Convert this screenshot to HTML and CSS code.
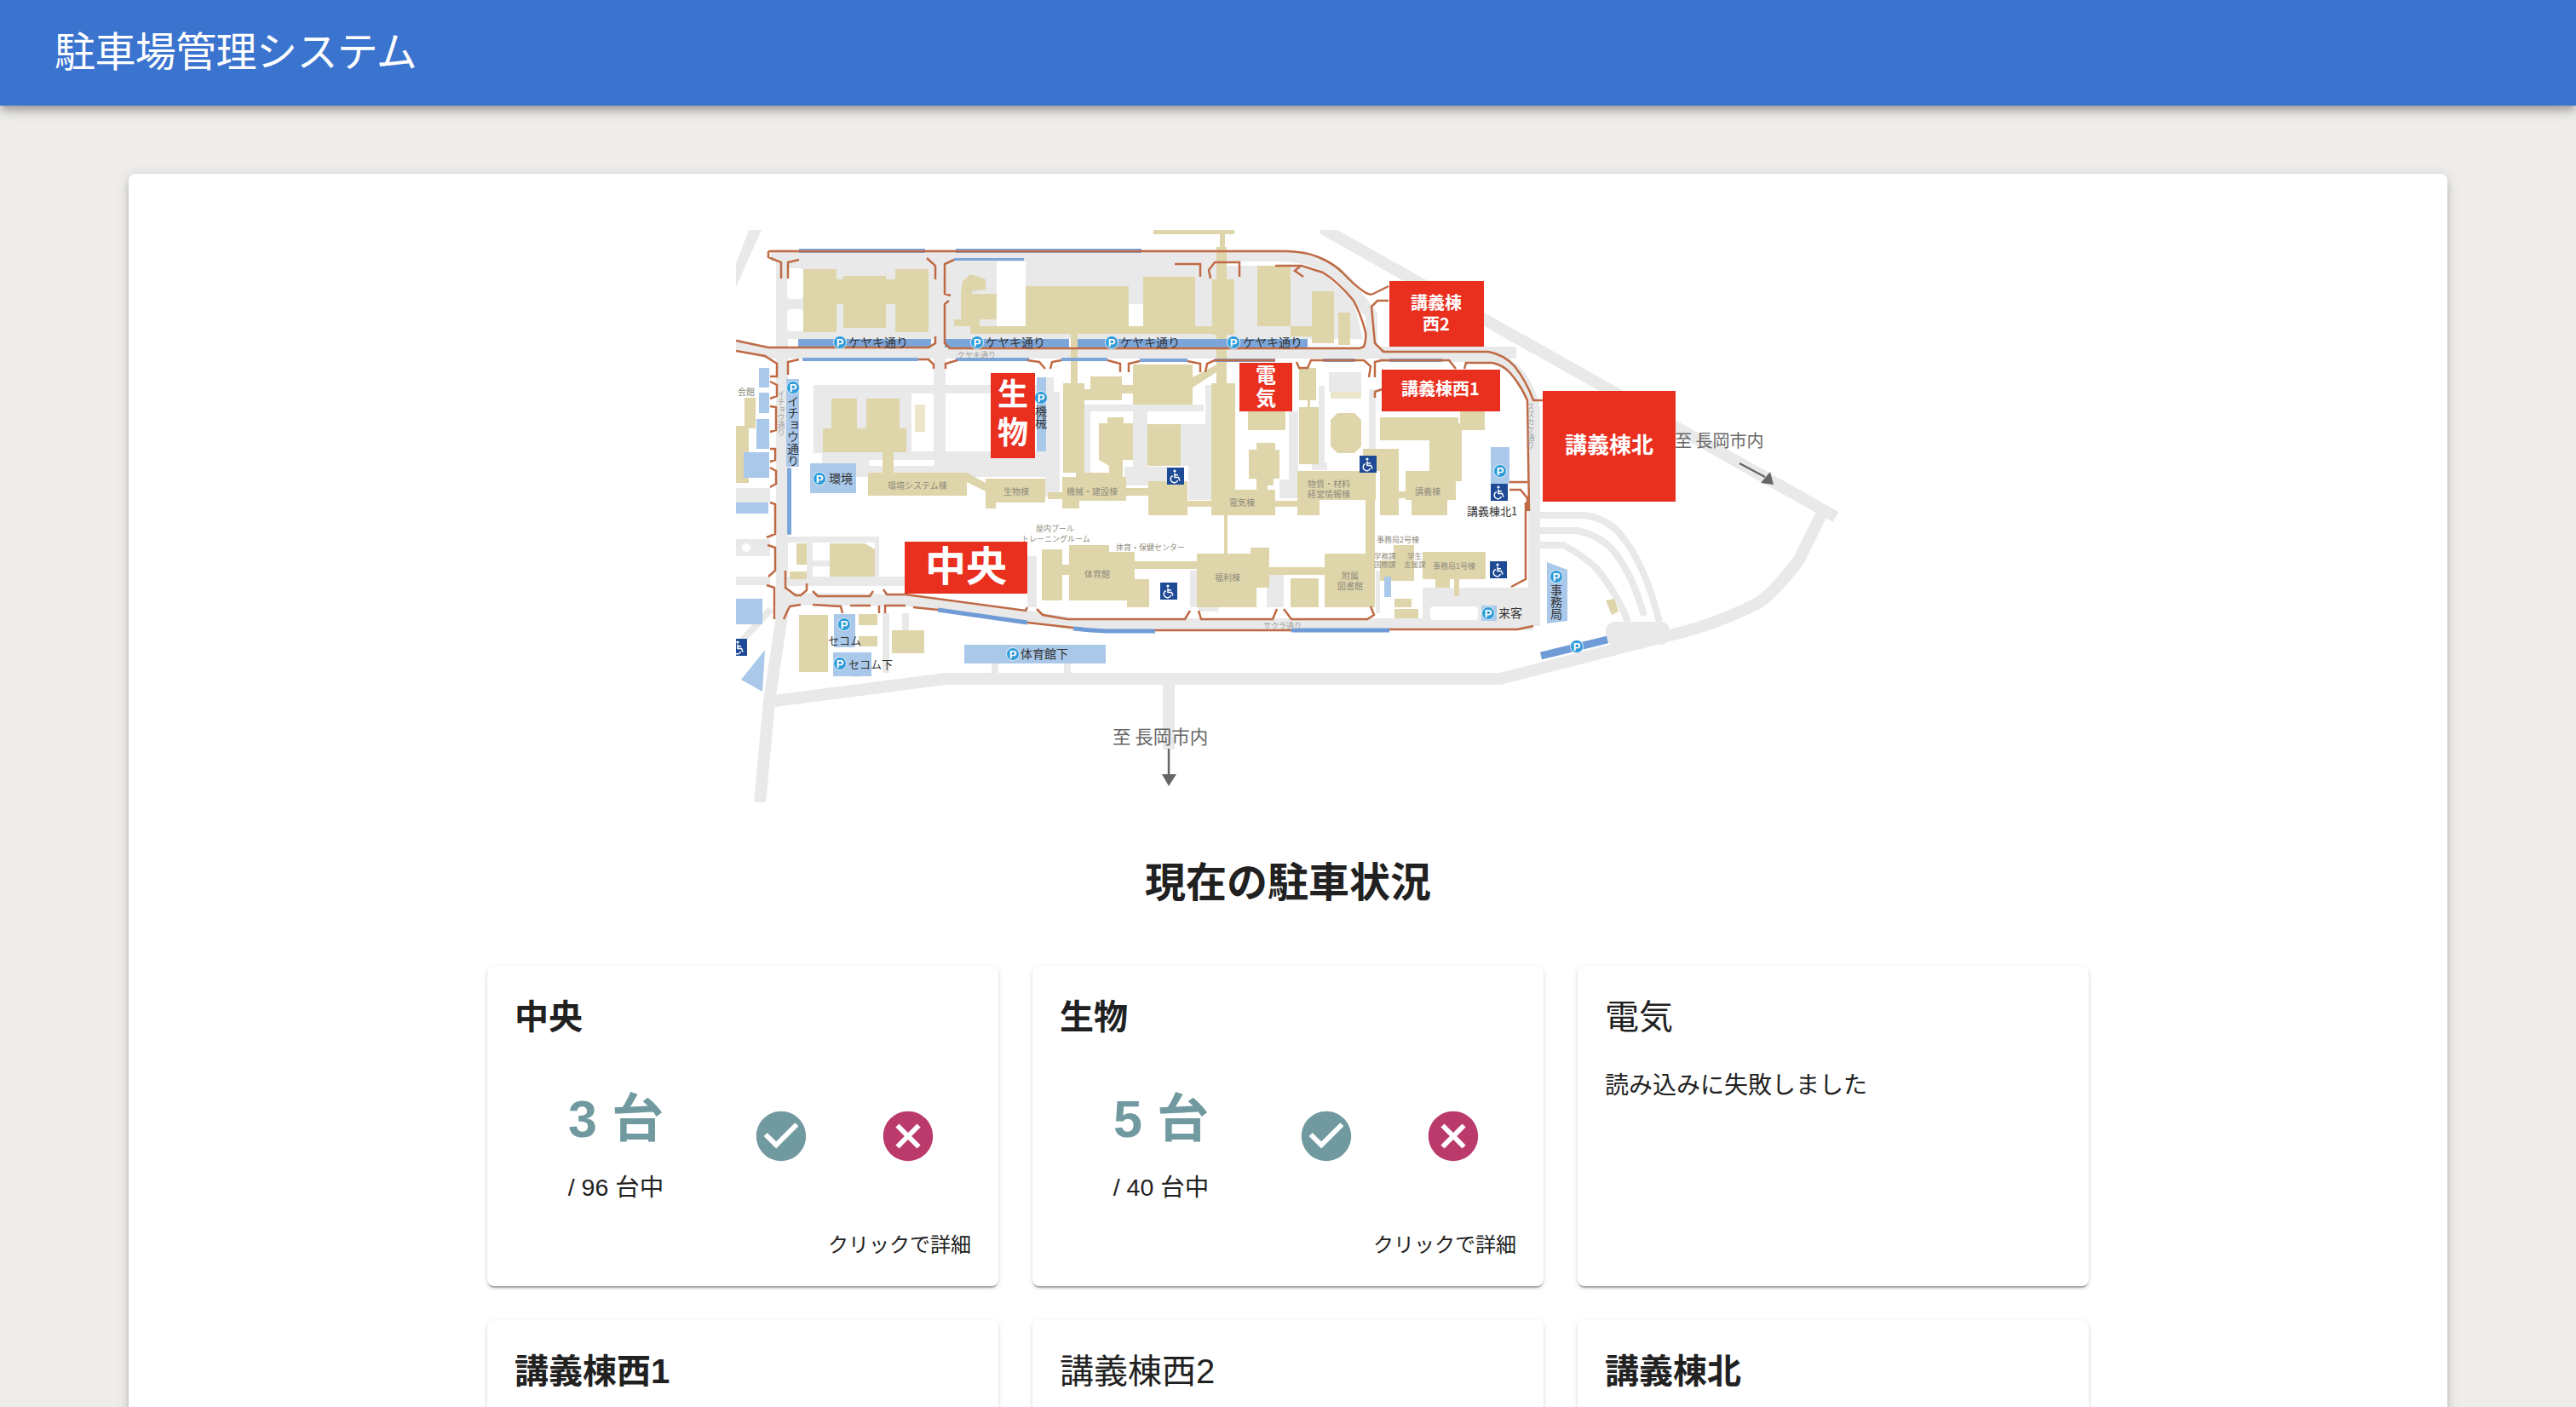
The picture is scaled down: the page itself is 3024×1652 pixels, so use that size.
FILE: index.html
```html
<!DOCTYPE html>
<html lang="ja">
<head>
  <meta charset="UTF-8"/>
  <title>駐車場管理システム</title>
  <link rel="stylesheet" href="styles.css">
</head>
<body>
  <header class="appbar">
    <h1 class="appbar-title">駐車場管理システム</h1>
  </header>

  <main class="sheet">
    <!-- 構内マップ (座標はスクリーンショットのピクセル値) -->
    <svg class="campus-map" viewBox="864 270 1296 672" role="img" aria-label="構内マップ">
      <defs>
        <g id="pk">
          <circle class="pk-ring" r="8"/>
          <circle class="pk-disc" r="7"/>
          <text class="pk-p" y="4.500">P</text>
        </g>
        <g id="wc">
          <rect class="wc-bg" width="20" height="20"/>
          <circle class="wc-fg" cx="9" cy="4" r="1.6"/>
          <path class="wc-line" d="M9 6.500V11.500H13.500L15 15.500M9 8.800H13"/>
          <path class="wc-line" d="M6.800 9.500A4.300 4.300 0 1 0 12.500 15"/>
        </g>
      </defs>

      <!-- 道路 -->
      <g class="road">
        <path d="M1552 268L2155 607"/>
        <path d="M2138 604L2112 657Q2080 700 2060 710Q2010 735 1956 747L1761 797H1110L909 823"/>
        <path d="M892 942L903 823L918 723V296"/>
        <path d="M1372 797V880"/>
        <path class="road-s" d="M1168 779V792M1253 779V792"/>
        <path d="M864 405L902 414H1780"/>
        <path d="M905 300H1500Q1550 300 1580 330L1610 370V414"/>
        <path d="M1103 303V540"/>
        <path d="M918 703L1066 705L1208 724L1262 733H1800"/>
        <path d="M1619 418H1747Q1790 430 1801 480V735"/>
        <path class="road-s" d="M1807 605H1861Q1890 610 1904 630Q1930 660 1948 730"/>
        <path class="road-s" d="M1807 623H1852Q1875 628 1891 643Q1915 670 1930 723"/>
        <path class="road-s" d="M1802 640H1835Q1855 650 1874 667Q1900 700 1911 730"/>
        <path class="road-s" d="M864 760L905 715"/>
        <path class="road-s" d="M1005 795V770M1040 790V720M1063 720V745"/>
      </g>
      <g class="grey">
        <polygon points="879,270 894,270 864,337 864,310"/>
        <rect x="918" y="303" width="180" height="95"/>
        <rect x="1109" y="300" width="320" height="98"/>
        <polygon points="1428,312 1520,312 1553,320 1589,353 1600,398 1428,398"/>
        <rect x="955" y="452" width="142" height="10"/>
        <rect x="955" y="452" width="115" height="80"/>
        <rect x="965" y="530" width="265" height="30"/>
        <rect x="1109" y="452" width="118" height="10"/>
        <rect x="1227" y="460" width="17" height="123"/>
        <rect x="1228" y="443" width="9" height="134"/>
        <rect x="1273" y="475" width="140" height="8"/>
        <rect x="1273" y="475" width="7" height="80"/>
        <rect x="1330" y="483" width="17" height="77"/>
        <rect x="1386" y="498" width="29" height="49"/>
        <rect x="1395" y="547" width="20" height="40"/>
        <rect x="1320" y="548" width="50" height="22"/>
        <rect x="1415" y="452" width="7" height="135"/>
        <rect x="1513" y="483" width="11" height="90"/>
        <rect x="1502" y="563" width="22" height="22"/>
        <rect x="1548" y="453" width="7" height="99"/>
        <rect x="1540" y="543" width="18" height="9"/>
        <rect x="1607" y="457" width="8" height="70"/>
        <rect x="1560" y="437" width="38" height="23"/>
        <rect x="1397" y="670" width="8" height="43"/>
        <rect x="1487" y="675" width="20" height="38"/>
        <rect x="1407" y="710" width="23" height="8"/>
        <rect x="1615" y="670" width="5" height="50"/>
        <rect x="864" y="573" width="40" height="17"/>
        <rect x="864" y="633" width="40" height="20"/>
        <rect x="864" y="677" width="40" height="10"/>
        <circle cx="876" cy="643" r="10"/>
        <rect x="922" y="630" width="110" height="7"/>
        <rect x="1027" y="630" width="5" height="47"/>
        <rect x="922" y="677" width="140" height="11"/>
        <rect x="947" y="637" width="7" height="40"/>
        <rect x="954" y="658" width="20" height="7"/>
        <rect x="1206" y="653" width="11" height="60"/>
        <rect x="1670" y="690" width="130" height="40"/>
        <rect x="1885" y="730" width="75" height="27" rx="10"/>
      </g>
      <g class="blank">
        <rect x="924" y="315" width="19" height="36" rx="4"/>
        <rect x="924" y="363" width="19" height="26" rx="4"/>
        <rect x="1170" y="307" width="34" height="77"/>
        <rect x="1325" y="357" width="17" height="26"/>
        <rect x="1679" y="712" width="56" height="16" rx="4"/>
        <rect x="1020" y="540" width="77" height="7" rx="3"/>
        <circle cx="876" cy="643" r="5"/>
      </g>

      <!-- 建物 -->
      <g class="bldg">
        <rect x="943" y="316" width="39" height="74"/>
        <rect x="982" y="328" width="8" height="29"/>
        <rect x="990" y="324" width="50" height="61"/>
        <rect x="1040" y="328" width="11" height="29"/>
        <rect x="1051" y="316" width="39" height="74"/>
        <polygon points="1130,330 1139,322 1157,328 1157,340 1141,342 1141,345 1128,345"/>
        <rect x="1128" y="345" width="42" height="30"/>
        <rect x="1120" y="375" width="30" height="8"/>
        <rect x="1139" y="383" width="287" height="9"/>
        <rect x="1204" y="336" width="121" height="47"/>
        <rect x="1342" y="325" width="61" height="58"/>
        <rect x="1354" y="270" width="95" height="5"/>
        <rect x="1432" y="270" width="6" height="30"/>
        <rect x="1428" y="290" width="12" height="38"/>
        <rect x="1423" y="328" width="26" height="65"/>
        <rect x="1428" y="392" width="12" height="58"/>
        <rect x="1422" y="450" width="28" height="125"/>
        <rect x="1257" y="392" width="8" height="58"/>
        <rect x="1248" y="450" width="25" height="105"/>
        <rect x="1273" y="457" width="7" height="13"/>
        <rect x="1280" y="442" width="37" height="28"/>
        <rect x="1317" y="452" width="13" height="10"/>
        <rect x="1330" y="428" width="70" height="47"/>
        <polygon points="1400,443 1428,428 1428,437 1400,455"/>
        <polygon points="1300,490 1319,490 1319,497 1330,497 1330,540 1318,540 1318,560 1302,560 1302,547 1290,540 1290,497 1300,497"/>
        <rect x="1347" y="498" width="39" height="49"/>
        <rect x="1247" y="560" width="75" height="28"/>
        <rect x="1263" y="555" width="47" height="5"/>
        <rect x="1247" y="588" width="20" height="9"/>
        <rect x="1322" y="573" width="26" height="9"/>
        <rect x="1348" y="565" width="46" height="40"/>
        <rect x="1394" y="588" width="28" height="7"/>
        <rect x="1422" y="575" width="75" height="30"/>
        <rect x="1475" y="570" width="13" height="5"/>
        <rect x="1497" y="588" width="26" height="7"/>
        <polygon points="1475,483 1509,483 1509,505 1465,505 1465,483"/>
        <polygon points="1475,520 1497,520 1497,528 1502,528 1502,562 1495,562 1495,570 1475,570 1475,562 1466,562 1466,528 1475,528"/>
        <rect x="1525" y="432" width="20" height="38"/>
        <rect x="1535" y="470" width="3" height="8"/>
        <rect x="1525" y="478" width="23" height="67"/>
        <polygon points="1570,485 1590,485 1598,493 1598,524 1590,532 1570,532 1562,524 1562,493"/>
        <rect class="bldg-faint" x="1562" y="460" width="36" height="8"/>
        <rect x="1523" y="553" width="92" height="34"/>
        <rect x="1523" y="587" width="26" height="18"/>
        <rect x="1603" y="587" width="11" height="63"/>
        <rect x="1600" y="527" width="42" height="26"/>
        <rect x="1620" y="553" width="22" height="52"/>
        <rect x="1642" y="577" width="8" height="8"/>
        <rect x="1650" y="553" width="59" height="34"/>
        <rect x="1657" y="587" width="42" height="18"/>
        <rect x="1678" y="503" width="38" height="62"/>
        <rect x="1620" y="490" width="92" height="27"/>
        <rect x="1712" y="497" width="31" height="8"/>
        <rect x="1714" y="468" width="29" height="35"/>
        <rect x="1019" y="555" width="116" height="27"/>
        <rect x="1036" y="530" width="13" height="25"/>
        <polygon points="1135,555 1157,567 1157,577 1135,566"/>
        <rect x="1157" y="562" width="70" height="28"/>
        <rect x="1157" y="590" width="12" height="7"/>
        <rect x="1230" y="578" width="17" height="8"/>
        <rect x="976" y="468" width="30" height="36"/>
        <rect x="1017" y="468" width="39" height="36"/>
        <rect x="966" y="503" width="98" height="28"/>
        <rect class="bldg-faint" x="1074" y="475" width="12" height="32"/>
        <rect x="874" y="467" width="13" height="36"/>
        <rect x="864" y="500" width="15" height="67"/>
        <rect x="1476" y="312" width="39" height="71"/>
        <rect x="1540" y="342" width="26" height="61"/>
        <rect x="1571" y="367" width="14" height="38"/>
        <rect x="1515" y="383" width="25" height="12"/>
        <rect x="1349" y="590" width="0" height="0"/>
        <rect x="1157" y="590" width="11" height="7"/>
        <rect x="1247" y="590" width="19" height="7"/>
        <rect x="1223" y="645" width="24" height="60"/>
        <rect x="1247" y="663" width="8" height="12"/>
        <rect x="1255" y="640" width="47" height="65"/>
        <rect x="1302" y="648" width="30" height="57"/>
        <rect x="1323" y="680" width="26" height="33"/>
        <rect x="1332" y="659" width="73" height="9"/>
        <rect x="1405" y="650" width="70" height="63"/>
        <rect x="1475" y="650" width="15" height="40"/>
        <rect x="1468" y="643" width="22" height="7"/>
        <rect x="1437" y="605" width="4" height="45"/>
        <rect x="1490" y="666" width="65" height="9"/>
        <rect x="1515" y="679" width="33" height="34"/>
        <rect x="1555" y="650" width="59" height="63"/>
        <rect x="1636" y="640" width="24" height="42"/>
        <rect x="1620" y="658" width="16" height="24"/>
        <rect x="1670" y="648" width="74" height="32"/>
        <rect x="1685" y="680" width="17" height="10"/>
        <rect x="1707" y="680" width="6" height="20"/>
        <rect x="1637" y="703" width="20" height="10"/>
        <rect x="1637" y="715" width="28" height="11"/>
        <polygon points="1885,705 1895,703 1900,718 1892,722"/>
        <polygon points="974,638 1015,638 1027,645 1027,677 974,677"/>
        <rect x="935" y="638" width="12" height="25"/>
        <rect x="927" y="671" width="20" height="9"/>
        <rect x="938" y="722" width="34" height="67"/>
        <rect x="1008" y="721" width="22" height="13"/>
        <rect x="1008" y="747" width="22" height="12"/>
        <rect x="1047" y="740" width="38" height="27"/>
      </g>

      <!-- 駐車スペース -->
      <g class="pale">
        <rect x="891" y="432" width="12" height="23"/>
        <rect x="891" y="461" width="12" height="24"/>
        <rect x="888" y="492" width="15" height="35"/>
        <rect x="873" y="531" width="30" height="30"/>
        <rect x="864" y="590" width="38" height="13"/>
        <rect x="864" y="703" width="31" height="30"/>
        <rect x="923" y="445" width="15" height="103"/>
        <rect x="951" y="544" width="54" height="35"/>
        <rect x="1217" y="443" width="11" height="87"/>
        <rect x="1750" y="525" width="22" height="43"/>
        <rect x="979" y="721" width="25" height="39"/>
        <rect x="978" y="766" width="45" height="28"/>
        <rect x="1132" y="757" width="166" height="22"/>
        <polygon points="870,798 898,763 895,812"/>
        <rect x="1739" y="711" width="18" height="18"/>
        <polygon points="1816,660 1840,669 1840,729 1816,732"/>
        <rect x="1625" y="677" width="8" height="24"/>
      </g>
      <g class="blue">
        <rect x="937" y="398" width="156" height="10"/>
        <rect x="1109" y="398" width="146" height="10"/>
        <rect x="1265" y="398" width="163" height="10"/>
        <rect x="1400" y="398" width="135" height="10"/>
        <rect x="942" y="420" width="136" height="4"/>
        <rect x="1122" y="420" width="86" height="4"/>
        <rect x="1246" y="420" width="54" height="4"/>
        <rect x="1338" y="421" width="56" height="4"/>
        <rect x="1426" y="421" width="71" height="4"/>
        <rect x="1553" y="421" width="38" height="4"/>
        <rect x="1631" y="421" width="62" height="4"/>
        <rect x="1120" y="303" width="82" height="3"/>
        <rect x="938" y="292" width="148" height="5"/>
        <rect x="1122" y="292" width="218" height="5"/>
        <rect x="924" y="549" width="5" height="79" rx="2"/>
      </g>
      <g class="blue-line">
        <path d="M1101 716L1206 731"/>
        <path d="M1260 738Q1290 741 1306 741H1356"/>
        <path d="M1516 740H1631"/>
        <path class="blue-thick" d="M1809 770L1887 751"/>
      </g>

      <!-- 縁石 -->
      <path class="curb" d="M902 295H1512Q1535 296 1548 302Q1565 309 1576 320Q1590 335 1602 343Q1608 347 1612 345L1630 336
        M902 295V302L917 308V327 M938 305L925 308V327 M1088 303L1098 312V328
        M1120 305L1109 310V345L1116 347 M1114 353L1109 357V403L1115 409H1596L1601 407Q1604 400 1603 390Q1598 370 1589 353Q1570 330 1553 320L1528 312H1497
        M864 400L902 408H1090L1098 403V395 M864 412L898 418L912 427V442H904
        M925 440V425L938 422 M1078 422H1090L1096 428V433 M1110 433V427L1124 423 M1206 423L1220 425L1227 433
        M1233 433L1235 425L1246 423 M1300 423L1315 427V437 M1325 437V427L1338 424 M1394 424L1409 427V437
        M1415 437L1417 427L1426 423H1497 M904 448L912 452V465L904 468 M904 477L911 478V505L904 507 M904 527H910V540L904 542
        M904 549L911 553V568L904 572 M904 590L910 592V627L900 631 M901 640L910 643V670L902 677 M900 687L909 690V727
        M922 670V690L934 699H940L947 693V685 M954 694L960 700H1021L1025 694 M1037 692L1041 698H1063L1204 717L1206 713
        M1217 715L1224 722L1253 727H1391L1397 717 M1407 717L1410 727H1494L1499 715 M1507 715L1516 727H1605L1613 722L1609 712
        M920 727L927 712L940 710 M954 710L987 712L989 720 M998 711H1022 M1032 720V711 M1039 720V711H1063 M1072 713L1101 716
        M1206 731L1260 737 M1356 740H1516 M1631 739H1781L1800 735 M1791 590V680L1774 689
        M1379 310H1409V325 M1455 325V308H1426L1419 317L1421 327 M1527 312L1520 318L1530 325
        M1630 353H1617L1610 360L1614 403L1624 413H1747Q1765 416 1778 430Q1792 448 1800 470H1811
        M1719 433L1721 426H1752Q1765 429 1772 437Q1785 452 1793 470L1795 600
        M1614 443V425L1622 423H1701L1709 433 M1607 443L1609 430L1601 423H1553 M1522 425L1525 432H1535L1539 423H1553
        M1614 467V460L1622 457 M1772 566H1793 M1772 575H1785L1793 585V600"/>

      <!-- 通りの名前 -->
      <g class="lbl-road">
        <text x="1124" y="420">ケヤキ通り</text>
        <text x="1483" y="738">サクラ通り</text>
        <text class="lbl-vert" x="917" y="458">イチョウ通り</text>
        <text class="lbl-vert" x="1797" y="473">スズカケ通り</text>
      </g>

      <!-- 建物名 -->
      <g class="lbl-bldg">
        <text x="866" y="464">会館</text>
        <text x="1042" y="574">環境システム棟</text>
        <text x="1178" y="581">生物棟</text>
        <text x="1252" y="581">機械・建設棟</text>
        <text x="1443" y="594">電気棟</text>
        <text x="1535" y="572">物質・材料</text>
        <text x="1535" y="584">経営情報棟</text>
        <text x="1661" y="581">講義棟</text>
        <text class="lbl-sm" x="1216" y="624">屋内プール</text>
        <text class="lbl-sm" x="1199" y="636">トレーニングルーム</text>
        <text class="lbl-sm" x="1310" y="646">体育・保健センター</text>
        <text x="1273" y="678">体育館</text>
        <text x="1426" y="682">福利棟</text>
        <text class="lbl-sm" x="1616" y="637">事務局2号棟</text>
        <text class="lbl-xs" x="1613" y="656">学務課</text>
        <text class="lbl-xs" x="1613" y="666">国際課</text>
        <text class="lbl-xs" x="1652" y="656">学生</text>
        <text class="lbl-xs" x="1648" y="666">支援課</text>
        <text class="lbl-sm" x="1682" y="668">事務局1号棟</text>
        <text x="1575" y="680">附属</text>
        <text x="1570" y="692">図書館</text>
      </g>

      <!-- 駐車場名 -->
      <g class="lbl-park">
        <text x="996" y="407">ケヤキ通り</text>
        <text x="1157" y="407">ケヤキ通り</text>
        <text x="1315" y="407">ケヤキ通り</text>
        <text x="1459" y="407">ケヤキ通り</text>
        <text class="lbl-vert" x="931" y="464">イチョウ通り</text>
        <text class="lbl-vert" x="1222" y="476">機械</text>
        <text x="973" y="567">環境</text>
        <text class="lbl-sm" x="972" y="757">セコム</text>
        <text class="lbl-sm" x="996" y="785">セコム下</text>
        <text x="1198" y="773">体育館下</text>
        <text class="lbl-sm" x="1722" y="605">講義棟北1</text>
        <text x="1759" y="725">来客</text>
        <text class="lbl-vert" x="1827" y="686">事務局</text>
      </g>
      <g>
        <use href="#pk" x="986" y="402"/>
        <use href="#pk" x="1147" y="402"/>
        <use href="#pk" x="1305" y="402"/>
        <use href="#pk" x="1448" y="402"/>
        <use href="#pk" x="931" y="455"/>
        <use href="#pk" x="1222" y="467"/>
        <use href="#pk" x="962" y="562"/>
        <use href="#pk" x="1761" y="553"/>
        <use href="#pk" x="991" y="733"/>
        <use href="#pk" x="986" y="779"/>
        <use href="#pk" x="1189" y="768"/>
        <use href="#pk" x="1747" y="720"/>
        <use href="#pk" x="1827" y="677"/>
        <use href="#pk" x="1851" y="759"/>
        <use href="#wc" x="1370" y="549"/>
        <use href="#wc" x="1596" y="535"/>
        <use href="#wc" x="1750" y="568"/>
        <use href="#wc" x="1362" y="684"/>
        <use href="#wc" x="1749" y="659"/>
        <use href="#wc" x="857" y="750"/>
      </g>

      <!-- 至 長岡市内 -->
      <g class="lbl-dir">
        <text class="lbl-dir-low" x="1306" y="873">至 長岡市内</text>
        <path class="dir-line" d="M1372 879V912"/>
        <polygon points="1364,909 1381,909 1372,923"/>
        <path class="dir-line" d="M2042 544L2072 560"/>
        <polygon points="2067,567 2078,554 2082,569"/>
      </g>

      <!-- 駐車場の区画 -->
      <g class="zone">
        <rect x="1163" y="438" width="52" height="100"/>
        <rect x="1062" y="636" width="144" height="61"/>
        <rect x="1455" y="426" width="62" height="57"/>
        <rect x="1631" y="330" width="111" height="77"/>
        <rect x="1622" y="434" width="139" height="49"/>
        <rect x="1811" y="459" width="156" height="130"/>
      </g>
      <g class="zone-text">
        <text class="zone-vert zone-vert-l" x="1189" y="489">生物</text>
        <text class="zone-48" x="1134" y="682">中央</text>
        <text class="zone-vert zone-vert-s" x="1486" y="455">電気</text>
        <text class="zone-20" x="1686" y="363">講義棟</text>
        <text class="zone-20" x="1686" y="388">西2</text>
        <text class="zone-20" x="1691" y="464">講義棟西1</text>
        <text class="zone-26" x="1889" y="532">講義棟北</text>
      </g>
      <text class="lbl-dir-top" x="1966" y="525">至 長岡市内</text>
    </svg>

    <h2 class="status-title">現在の駐車状況</h2>

    <section class="lot-grid">
      <article class="lot-card">
        <h3 class="lot-name lot-ok">中央</h3>
        <div class="lot-row">
          <div class="lot-counts">
            <div class="lot-free">3 台</div>
            <div class="lot-total">/ 96 台中</div>
          </div>
          <button class="lot-btn" type="button" aria-label="入庫">
            <svg class="lot-icon icon-in" viewBox="0 0 24 24"><path d="M12 2C6.48 2 2 6.48 2 12s4.48 10 10 10 10-4.48 10-10S17.52 2 12 2zm-2 15l-5-5 1.41-1.41L10 14.17l7.59-7.59L19 8l-9 9z"/></svg>
          </button>
          <button class="lot-btn" type="button" aria-label="出庫">
            <svg class="lot-icon icon-out" viewBox="0 0 24 24"><path d="M12 2C6.47 2 2 6.47 2 12s4.47 10 10 10 10-4.47 10-10S17.53 2 12 2zm5 13.59L15.59 17 12 13.41 8.41 17 7 15.59 10.59 12 7 8.41 8.41 7 12 10.59 15.59 7 17 8.41 13.41 12 17 15.59z"/></svg>
          </button>
        </div>
        <p class="lot-more">クリックで詳細</p>
      </article>

      <article class="lot-card">
        <h3 class="lot-name lot-ok">生物</h3>
        <div class="lot-row">
          <div class="lot-counts">
            <div class="lot-free">5 台</div>
            <div class="lot-total">/ 40 台中</div>
          </div>
          <button class="lot-btn" type="button" aria-label="入庫">
            <svg class="lot-icon icon-in" viewBox="0 0 24 24"><path d="M12 2C6.48 2 2 6.48 2 12s4.48 10 10 10 10-4.48 10-10S17.52 2 12 2zm-2 15l-5-5 1.41-1.41L10 14.17l7.59-7.59L19 8l-9 9z"/></svg>
          </button>
          <button class="lot-btn" type="button" aria-label="出庫">
            <svg class="lot-icon icon-out" viewBox="0 0 24 24"><path d="M12 2C6.47 2 2 6.47 2 12s4.47 10 10 10 10-4.47 10-10S17.53 2 12 2zm5 13.59L15.59 17 12 13.41 8.41 17 7 15.59 10.59 12 7 8.41 8.41 7 12 10.59 15.59 7 17 8.41 13.41 12 17 15.59z"/></svg>
          </button>
        </div>
        <p class="lot-more">クリックで詳細</p>
      </article>

      <article class="lot-card">
        <h3 class="lot-name">電気</h3>
        <p class="lot-error">読み込みに失敗しました</p>
      </article>

      <article class="lot-card">
        <h3 class="lot-name lot-ok">講義棟西1</h3>
      </article>
      <article class="lot-card">
        <h3 class="lot-name">講義棟西2</h3>
      </article>
      <article class="lot-card">
        <h3 class="lot-name lot-ok">講義棟北</h3>
      </article>
    </section>
  </main>
</body>
</html>
```

FILE: styles.css
```css
* { box-sizing: border-box; margin: 0; padding: 0; }

body {
  background: #eeedeb;
  color: #212121;
  font-family: "Liberation Sans", "Noto Sans CJK JP", sans-serif;
}

.appbar {
  display: flex;
  align-items: center;
  height: 124px;
  padding: 0 64px;
  background: #3b74ce;
  color: #fff;
  box-shadow: 0 4px 8px -2px rgba(0,0,0,.2), 0 8px 10px rgba(0,0,0,.14), 0 2px 20px rgba(0,0,0,.12);
  position: relative;
}
.appbar-title {
  font-size: 48px;
  font-weight: 400;
  line-height: 1.2;
  letter-spacing: -.6px;
}

.sheet {
  margin: 80px 151px 0;
  padding: 66px 0 80px;
  background: #fff;
  border-radius: 8px;
  box-shadow: 0 6px 6px -4px rgba(0,0,0,.2), 0 6px 8px rgba(0,0,0,.14), 0 2px 16px rgba(0,0,0,.12);
}

/* マップ */
.campus-map {
  display: block;
  width: 1296px;
  height: 672px;
  margin: 0 auto;
  font-family: "Noto Sans CJK JP", sans-serif;
}
.road path { fill: none; stroke: #e8e9e8; stroke-width: 14; }
.road .road-s { stroke-width: 8; }
.grey { fill: #e8e9e8; }
.blank { fill: #fff; }
.bldg { fill: #dfd5ab; }
.bldg .bldg-faint { fill: #ece6cb; }
.pale { fill: #a9c8ea; }
.blue { fill: #7ca6da; }
.blue-line path { fill: none; stroke: #6f9bd6; stroke-width: 5; }
.blue-line .blue-thick { stroke-width: 9; }
.curb { fill: none; stroke: #bf6a45; stroke-width: 2.5; }
.zone { fill: #e9301f; }
.zone-text { fill: #fff; font-weight: 700; text-anchor: middle; }
.zone-20 { font-size: 20px; }
.zone-26 { font-size: 26px; }
.zone-48 { font-size: 48px; }
.zone-vert { writing-mode: vertical-rl; }
.zone-vert-l { font-size: 36px; letter-spacing: 9px; }
.zone-vert-s { font-size: 24px; letter-spacing: 3px; }

.pk-ring { fill: #d3e8f8; }
.pk-disc { fill: #2f9bd8; }
.pk-p { fill: #fff; font-size: 13px; font-weight: 700; text-anchor: middle; font-family: "Liberation Sans", sans-serif; }
.wc-bg { fill: #1e4a96; }
.wc-fg { fill: #fff; }
.wc-line { fill: none; stroke: #fff; stroke-width: 1.5; }

.lbl-road text { fill: #a3a3a3; font-size: 9px; }
.lbl-bldg text { fill: #8f8c7c; font-size: 10px; }
.lbl-bldg .lbl-sm { font-size: 9px; }
.lbl-bldg .lbl-xs { font-size: 8.5px; }
.lbl-park text { fill: #333; font-size: 14px; }
.lbl-park .lbl-sm { font-size: 13px; }
.lbl-vert { writing-mode: vertical-rl; }
.lbl-dir text, .lbl-dir-top { fill: #666; font-size: 20px; }
.lbl-dir .lbl-dir-low { font-size: 21.5px; }
.lbl-dir polygon { fill: #666; }
.dir-line { fill: none; stroke: #666; stroke-width: 2.5; }

/* 駐車状況 */
.status-title {
  margin: 66px 0 68px;
  font-size: 48px;
  font-weight: 700;
  line-height: 58px;
  text-align: center;
  color: #212121;
}

.lot-grid {
  display: grid;
  grid-template-columns: repeat(3, 600px);
  gap: 40px;
  justify-content: center;
}
.lot-card {
  height: 376px;
  padding: 32px;
  background: #fff;
  border-radius: 8px;
  box-shadow: 0 4px 2px -2px rgba(0,0,0,.2), 0 2px 2px rgba(0,0,0,.14), 0 2px 6px rgba(0,0,0,.12);
}
.lot-name {
  font-size: 40px;
  font-weight: 400;
  line-height: 56px;
}
.lot-ok { font-weight: 700; }

.lot-row {
  display: grid;
  grid-template-columns: 238px 149px 149px;
  align-items: start;
  margin-top: 53px;
}
.lot-counts { text-align: center; }
.lot-free {
  padding-top: 1px;
  color: #719aa0;
  font-size: 61px;
  font-weight: 700;
  line-height: 76px;
}
.lot-total {
  margin-top: 22px;
  font-size: 28.5px;
  line-height: 40px;
}
.lot-btn {
  display: flex;
  justify-content: center;
  margin-top: 24px;
  background: none;
  border: 0;
}
.lot-icon { display: block; width: 70px; height: 70px; }
.icon-in { fill: #719aa0; }
.icon-out { fill: #ba3a6c; }

.lot-more {
  margin-top: 30px;
  font-size: 24px;
  line-height: 36px;
  text-align: right;
}
.lot-error {
  margin-top: 33px;
  font-size: 28px;
  line-height: 40px;
}
```
